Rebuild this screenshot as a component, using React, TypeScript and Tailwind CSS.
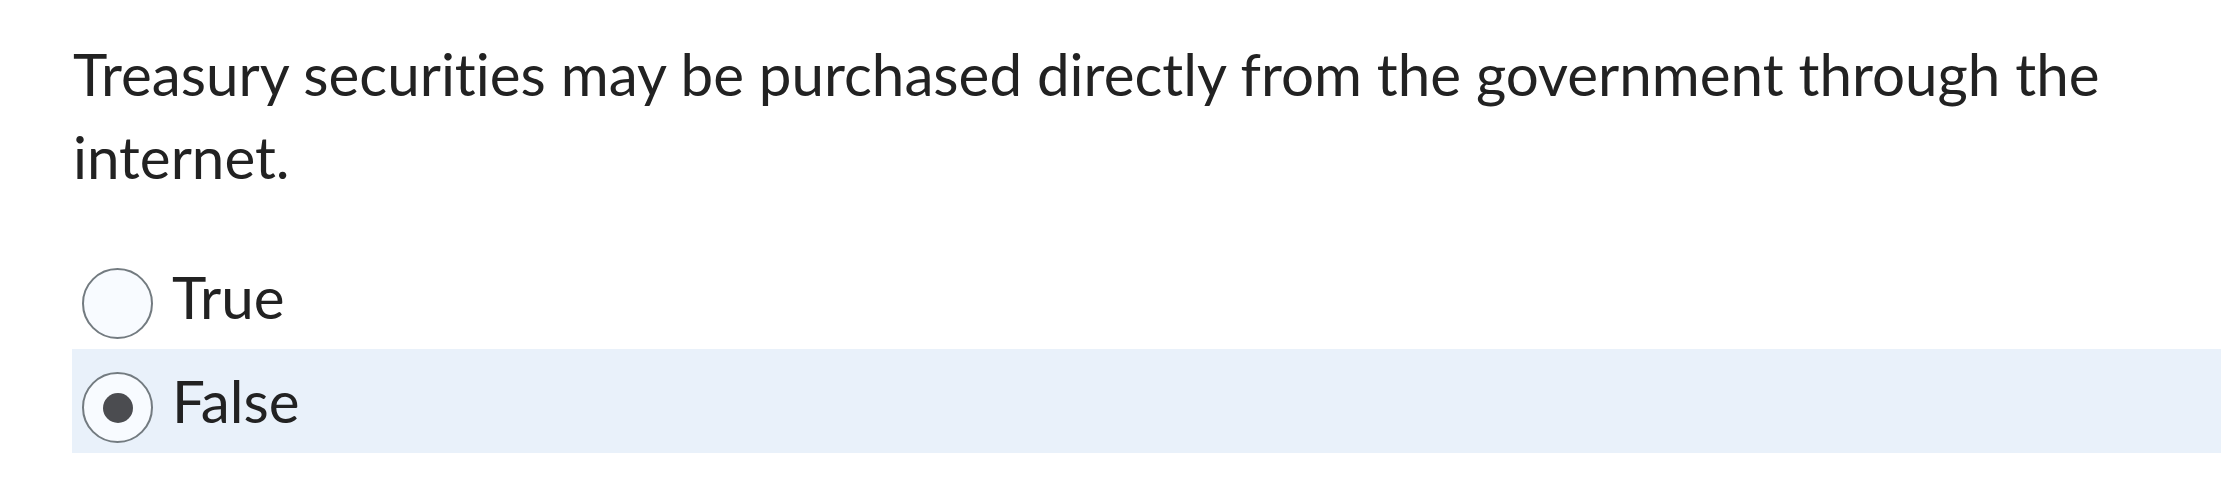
export default function App() {
  const options = [
    { label: "True", checked: false },
    { label: "False", checked: true },
  ];

  return (
    <div className="min-h-screen bg-white pl-[72px] pt-[32px] font-['Lato',_'Noto_Sans',_sans-serif] text-[#222222] [font-variant-ligatures:none]">
      {/* Question */}
      <p className="text-[58.3px] leading-[83px] pl-[1px]">
        Treasury securities may be purchased directly from the government through the internet.
      </p>

      {/* Answers */}
      <div className="mt-[47px] flex flex-col">
        {options.map((o) => (
          <label
            key={o.label}
            className={
              o.checked
                ? "flex items-start py-[10px] bg-[#e9f1fa]"
                : "flex items-start py-[10px]"
            }
          >
            <span className="ml-[10px] mt-[13px] flex h-[71px] w-[71px] shrink-0 items-center justify-center rounded-full border-2 border-[#737b80] bg-[#f8fbff]">
              {o.checked && (
                <span className="h-[30px] w-[30px] rounded-full bg-[#4b4c50]" />
              )}
            </span>
            <span className="ml-[19px] text-[58.3px] leading-[83px]">{o.label}</span>
          </label>
        ))}
      </div>
    </div>
  );
}
